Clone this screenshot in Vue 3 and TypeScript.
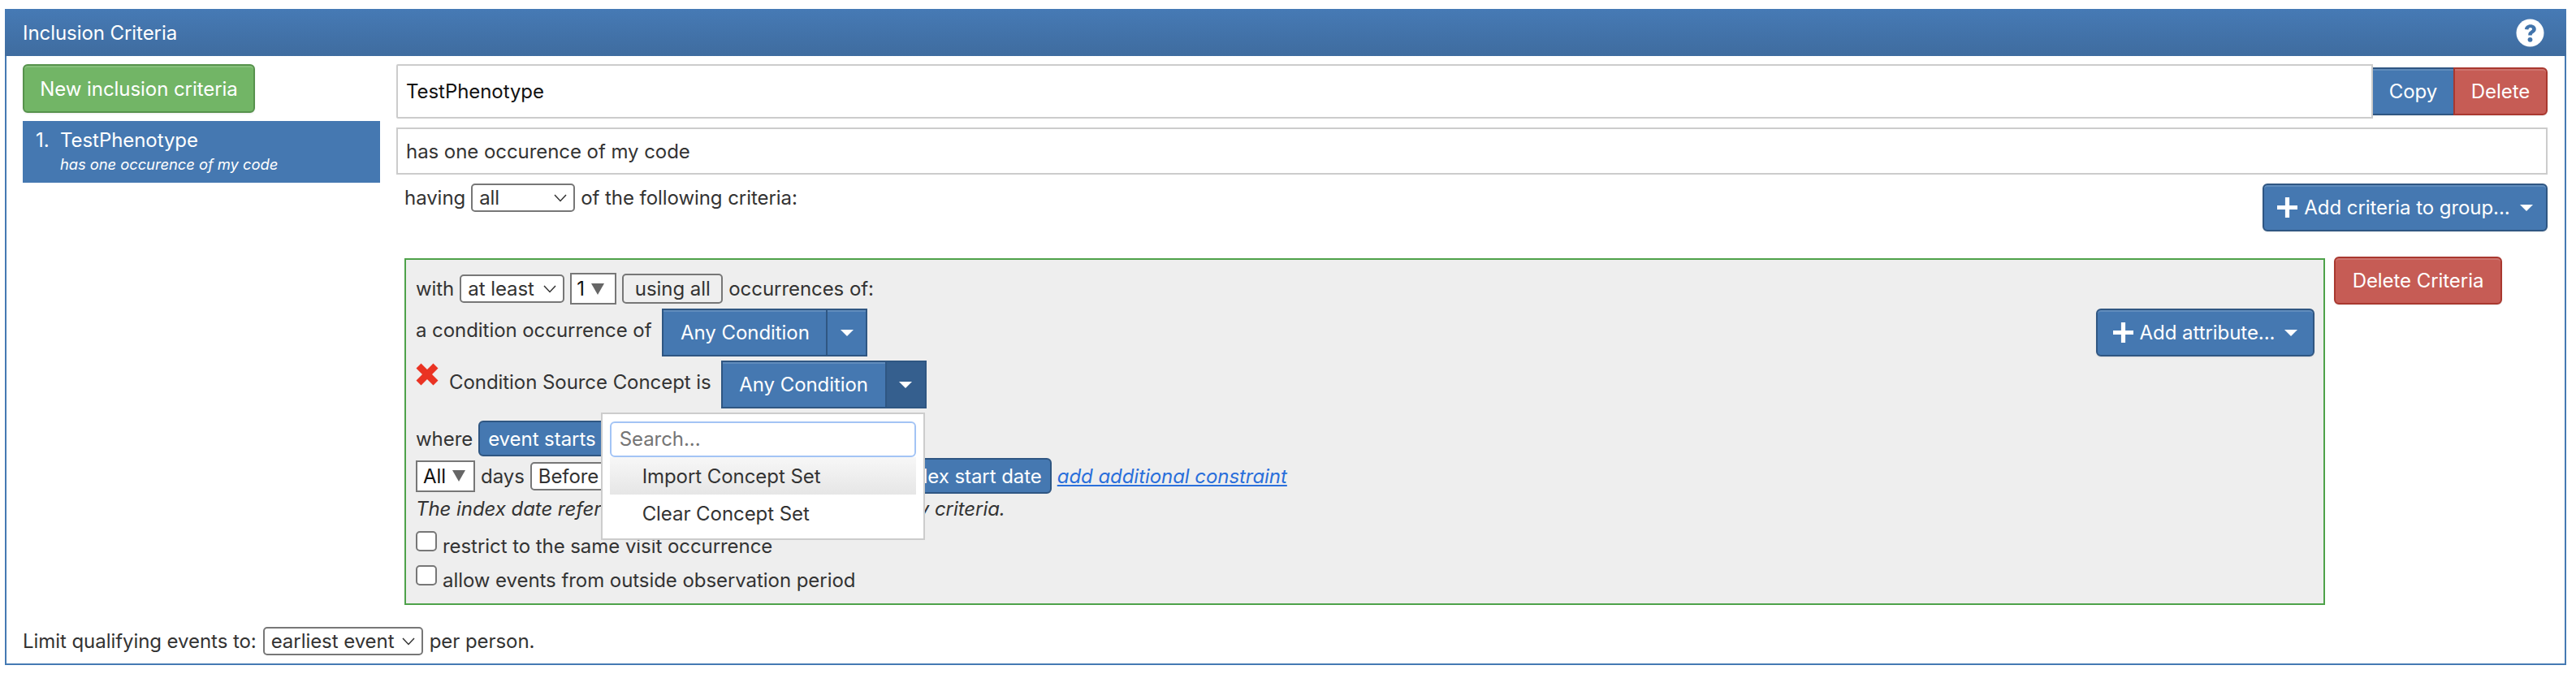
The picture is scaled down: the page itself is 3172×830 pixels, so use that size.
<template>
  <div class="panel">
    <div class="panel-heading">
      <span>Inclusion Criteria</span>
      <svg class="help" viewBox="0 0 36 36" aria-label="Help">
        <circle cx="18" cy="18" r="17.5" fill="#fff" />
        <path d="M11.2 13.4c.5-3.6 3.4-5.9 7.3-5.9 4 0 7 2.4 7 5.7 0 2.5-1.4 3.9-3.2 5-1.5.9-2 1.5-2 2.9h-4.6c-.2-2.8.7-4.2 2.7-5.4 1.4-.9 2.2-1.4 2.2-2.5 0-1-.9-1.8-2.2-1.8-1.4 0-2.3.9-2.6 2.5z" fill="#4274ab" />
        <circle cx="18" cy="26.6" r="3" fill="#4274ab" />
      </svg>
    </div>
    <div class="panel-body">
      <div class="columns">
        <div class="left">
          <button class="btn green new-btn">New inclusion criteria</button>
          <div class="rule-item">
            <div class="rule-title"><span class="rule-num">1.</span>TestPhenotype</div>
            <div class="rule-desc">has one occurence of my code</div>
          </div>
        </div>
        <div class="right">
          <div class="title-row">
            <div class="field title-field">TestPhenotype</div>
            <button class="btn blue copy-btn">Copy</button>
            <button class="btn red delete-btn">Delete</button>
          </div>
          <div class="field desc-field">has one occurence of my code</div>
          <div class="having-row">
            <div class="having">
              having
              <span class="pick pick-all">all<Chevron /></span>
              of the following criteria:
            </div>
            <button class="btn blue add-group">
              <svg class="plus" viewBox="0 0 24 24"><path d="M9.5 0h5v9.5H24v5h-9.5V24h-5v-9.5H0v-5h9.5z" fill="#fff" /></svg>
              Add criteria to group...
              <i class="caret"></i>
            </button>
          </div>
          <div class="criteria-row">
            <div class="criteria-box">
              <div class="line line-first">
                with
                <span class="pick pick-least">at least<Chevron /></span>
                <span class="numbox num-one">1<i class="grey-tri"></i></span>
                <span class="using">using all</span>
                occurrences of:
              </div>
              <div class="line line-second">
                <span class="up">a condition occurrence of</span>
                <div class="split">
                  <span class="split-main">Any Condition</span>
                  <span class="split-drop"><i class="caret"></i></span>
                </div>
                <button class="btn blue add-attr">
                  <svg class="plus" viewBox="0 0 24 24"><path d="M9.5 0h5v9.5H24v5h-9.5V24h-5v-9.5H0v-5h9.5z" fill="#fff" /></svg>
                  Add attribute...
                  <i class="caret"></i>
                </button>
              </div>
              <div class="line line-third">
                <svg class="cross" viewBox="0 0 28 28"><path d="M6.5 0.5 14 8l7.5-7.5 6 6L20 14l7.5 7.5-6 6L14 20l-7.5 7.5-6-6L8 14 .5 6.500z" fill="#ea3323" /></svg>
                <span class="concept-label">Condition Source Concept is</span>
                <div class="split open">
                  <span class="split-main">Any Condition</span>
                  <span class="split-drop"><i class="caret"></i></span>
                  <div class="menu">
                    <div class="search">Search...</div>
                    <div class="menu-item active">Import Concept Set</div>
                    <div class="menu-item">Clear Concept Set</div>
                  </div>
                </div>
              </div>
              <div class="line line-where">
                where
                <span class="pill event-pill">event starts before</span>
              </div>
              <div class="line line-days">
                <span class="numbox num-all">All<i class="grey-tri"></i></span>
                days
                <span class="pick pick-before">Before<Chevron /></span>
                <span class="pill index-pill">index start date</span>
                <a class="constraint" href="#">add additional constraint</a>
              </div>
              <div class="note">The index date refers to the event from the Cohort Entry criteria.</div>
              <label class="check first-check"><input type="checkbox" />restrict to the same visit occurrence</label>
              <label class="check"><input type="checkbox" />allow events from outside observation period</label>
            </div>
            <button class="btn red delete-criteria">Delete Criteria</button>
          </div>
        </div>
      </div>
      <div class="limit-row">
        Limit qualifying events to:
        <span class="pick pick-earliest">earliest event<Chevron /></span>
        per person.
      </div>
    </div>
  </div>
</template>

<script setup lang="ts">
import { h } from 'vue'

// Native select arrow, drawn so it looks the same everywhere
const Chevron = () =>
  h('svg', { class: 'chev', viewBox: '0 0 16 10', style: 'width:16px;height:10px;margin-left:auto;flex:none' }, [
    h('path', { d: 'M1 1l7 7.500L15 1', fill: 'none', stroke: '#333', 'stroke-width': '1.500' }),
  ])
</script>

<style>
body {
  background: #fff;
}
</style>

<style scoped>
.panel {
  width: 3154px;
  height: 808px;
  margin: 11px 0 0 6px;
  box-sizing: border-box;
  border: 2px solid #457ab3;
  border-top: 0;
  display: flex;
  flex-direction: column;
  font-family: Inter, "Liberation Sans", sans-serif;
  font-size: 24px;
  letter-spacing: -0.06px;
  color: #333;
}

.panel-heading {
  height: 58px;
  margin: 0 -2px;
  padding: 0 27px 0 22px;
  display: flex;
  align-items: center;
  justify-content: space-between;
  flex: none;
  color: #fff;
  background: linear-gradient(#467ab5, #3f6c9f);
}

.help {
  width: 35px;
  height: 35px;
}

.panel-body {
  flex: 1;
  display: flex;
  flex-direction: column;
  padding: 10px 21px 0 20px;
}

.columns {
  display: flex;
  gap: 20px;
}

.left {
  width: 440px;
  flex: none;
}

.right {
  flex: 1;
  min-width: 0;
}

.btn {
  height: 59px;
  box-sizing: border-box;
  padding: 0;
  border: 2px solid #2f5682;
  border-radius: 6px;
  font: inherit;
  letter-spacing: inherit;
  color: #fff;
  box-shadow: inset 0 2px 0 rgba(255, 255, 255, 0.15), 0 1px 2px rgba(0, 0, 0, 0.08);
}

.blue {
  background: #4578b1;
  border-color: #2f5682;
}

.green {
  background: #72b566;
  border-color: #56924c;
}

.red {
  background: #c65c55;
  border-color: #a9382f;
}

.new-btn {
  display: block;
  width: 286px;
  height: 60px;
}

.rule-item {
  height: 76px;
  margin-top: 10px;
  padding: 9px 0 0 16px;
  box-sizing: border-box;
  background: #4578b1;
  color: #fff;
}

.rule-title {
  line-height: 30px;
}

.rule-num {
  display: inline-block;
  width: 30px;
}

.rule-desc {
  margin: 1px 0 0 30px;
  font-size: 18.4px;
  font-style: italic;
  line-height: 26px;
}

.title-row {
  display: flex;
  align-items: center;
}

.field {
  box-sizing: border-box;
  border: 2px solid #ccc;
  padding: 0 10px;
  display: flex;
  align-items: center;
  background: #fff;
}

.title-field {
  flex: 1;
  height: 67px;
  color: #111;
  border-radius: 2px 0 0 2px;
}

.copy-btn {
  width: 99px;
  border-radius: 0;
  border-left: 0;
  border-right: 0;
}

.delete-btn {
  width: 116px;
  border-radius: 0 6px 6px 0;
}

.desc-field {
  height: 58px;
  margin-top: 11px;
}

.having-row {
  display: flex;
  justify-content: space-between;
  align-items: flex-start;
  margin-top: 11px;
}

.having {
  display: flex;
  align-items: center;
  gap: 7px;
  padding-left: 10px;
}

.pick {
  height: 35px;
  box-sizing: border-box;
  display: inline-flex;
  align-items: center;
  padding: 0 8px;
  border: 2px solid #777;
  border-radius: 5px;
  background: #fff;
}

.pick-all {
  width: 128px;
}

.pick-least {
  width: 129px;
}

.pick-before {
  width: 130px;
}

.pick-earliest {
  width: 197px;
}

.add-group {
  width: 351px;
  display: flex;
  align-items: center;
  justify-content: center;
  gap: 8px;
}

.add-attr {
  width: 269px;
  margin-left: auto;
  display: flex;
  align-items: center;
  justify-content: center;
  gap: 8px;
}

.plus {
  width: 25px;
  height: 25px;
  flex: none;
}

.caret {
  display: inline-block;
  width: 0;
  height: 0;
  margin-left: 4px;
  border-top: 8px solid #fff;
  border-left: 8px solid transparent;
  border-right: 8px solid transparent;
}

.criteria-row {
  display: flex;
  align-items: flex-start;
  gap: 11px;
  margin: 31px 0 0 10px;
}

.criteria-box {
  width: 2365px;
  height: 427px;
  margin-top: 2px;
  box-sizing: border-box;
  flex: none;
  padding: 16px 11px 0 12px;
  border: 2px solid #4ea24a;
  background: #eee;
}

.delete-criteria {
  width: 207px;
  flex: none;
  margin-top: 0;
}

.line {
  display: flex;
  align-items: center;
  gap: 7px;
}

.line-first {
  height: 39px;
}

.line-second {
  height: 59px;
  margin-top: 5px;
  gap: 13px;
}

.line-third {
  height: 59px;
  margin-top: 5px;
  gap: 0;
}

.up {
  margin-top: -6px;
}

.numbox {
  height: 39px;
  box-sizing: border-box;
  display: inline-flex;
  align-items: center;
  padding: 0 6px;
  gap: 8px;
  border: 2px solid #777;
  background: #fff;
  color: #111;
}

.num-one {
  width: 57px;
}

.num-all {
  width: 73px;
  padding-left: 7px;
}

.grey-tri {
  width: 0;
  height: 0;
  border-top: 14px solid #666;
  border-left: 8px solid transparent;
  border-right: 8px solid transparent;
}

.using {
  width: 124px;
  height: 37px;
  box-sizing: border-box;
  display: inline-flex;
  align-items: center;
  justify-content: center;
  border: 2px solid #777;
  border-radius: 5px;
  background: #efefef;
}

.split {
  position: relative;
  height: 59px;
  display: flex;
  flex: none;
  box-sizing: border-box;
  border: 2px solid #2f5682;
  background: #4578b1;
  color: #fff;
  box-shadow: inset 0 2px 0 rgba(255, 255, 255, 0.15);
}

.split-main {
  width: 200px;
  display: flex;
  align-items: center;
  justify-content: center;
  border-right: 2px solid #2f5682;
}

.split-drop {
  width: 47px;
  display: flex;
  align-items: center;
  justify-content: center;
}

.split-drop .caret {
  margin: 0;
}

.open .split-drop {
  background: #355f8e;
}

.cross {
  width: 28px;
  height: 28px;
  flex: none;
  margin: -26px 13px 0 0;
}

.concept-label {
  margin-right: 12px;
  margin-top: -6px;
}

.menu {
  position: absolute;
  top: 62px;
  right: 0;
  z-index: 2;
  width: 399px;
  height: 157px;
  box-sizing: border-box;
  padding: 9px;
  border: 2px solid #ccc;
  background: #fff;
  color: #333;
}

.search {
  height: 44px;
  box-sizing: border-box;
  display: flex;
  align-items: center;
  padding: 0 10px 2px;
  border: 2px solid #a3c4f5;
  border-radius: 6px;
  color: #757575;
}

.menu-item {
  height: 46px;
  display: flex;
  align-items: center;
  padding-left: 40px;
}

.active {
  background: linear-gradient(#f7f7f7, #e6e6e6);
}

.line-where {
  height: 44px;
  margin-top: 15px;
}

.pill {
  height: 44px;
  box-sizing: border-box;
  display: inline-flex;
  align-items: center;
  padding: 0 10px;
  border: 2px solid #2f5682;
  border-radius: 6px;
  background: #4578b1;
  color: #fff;
  white-space: nowrap;
}

.line-days {
  height: 44px;
  margin-top: 2px;
}

.index-pill {
  margin-left: 185px;
  width: 320px;
  justify-content: flex-end;
}

.constraint {
  color: #2a6fdb;
  font-style: italic;
}

.note {
  margin-top: 1px;
  line-height: 36px;
  font-style: italic;
}

.check {
  display: flex;
  align-items: center;
  height: 42px;
}

.first-check {
  margin-top: 6px;
}

.check input {
  width: 26px;
  height: 25px;
  margin: -11px 7px 0 0;
  appearance: none;
  box-sizing: border-box;
  border: 2px solid #777;
  border-radius: 5px;
  background: #fff;
}

.limit-row {
  display: flex;
  align-items: center;
  gap: 8px;
  margin-top: 27px;
}
</style>
